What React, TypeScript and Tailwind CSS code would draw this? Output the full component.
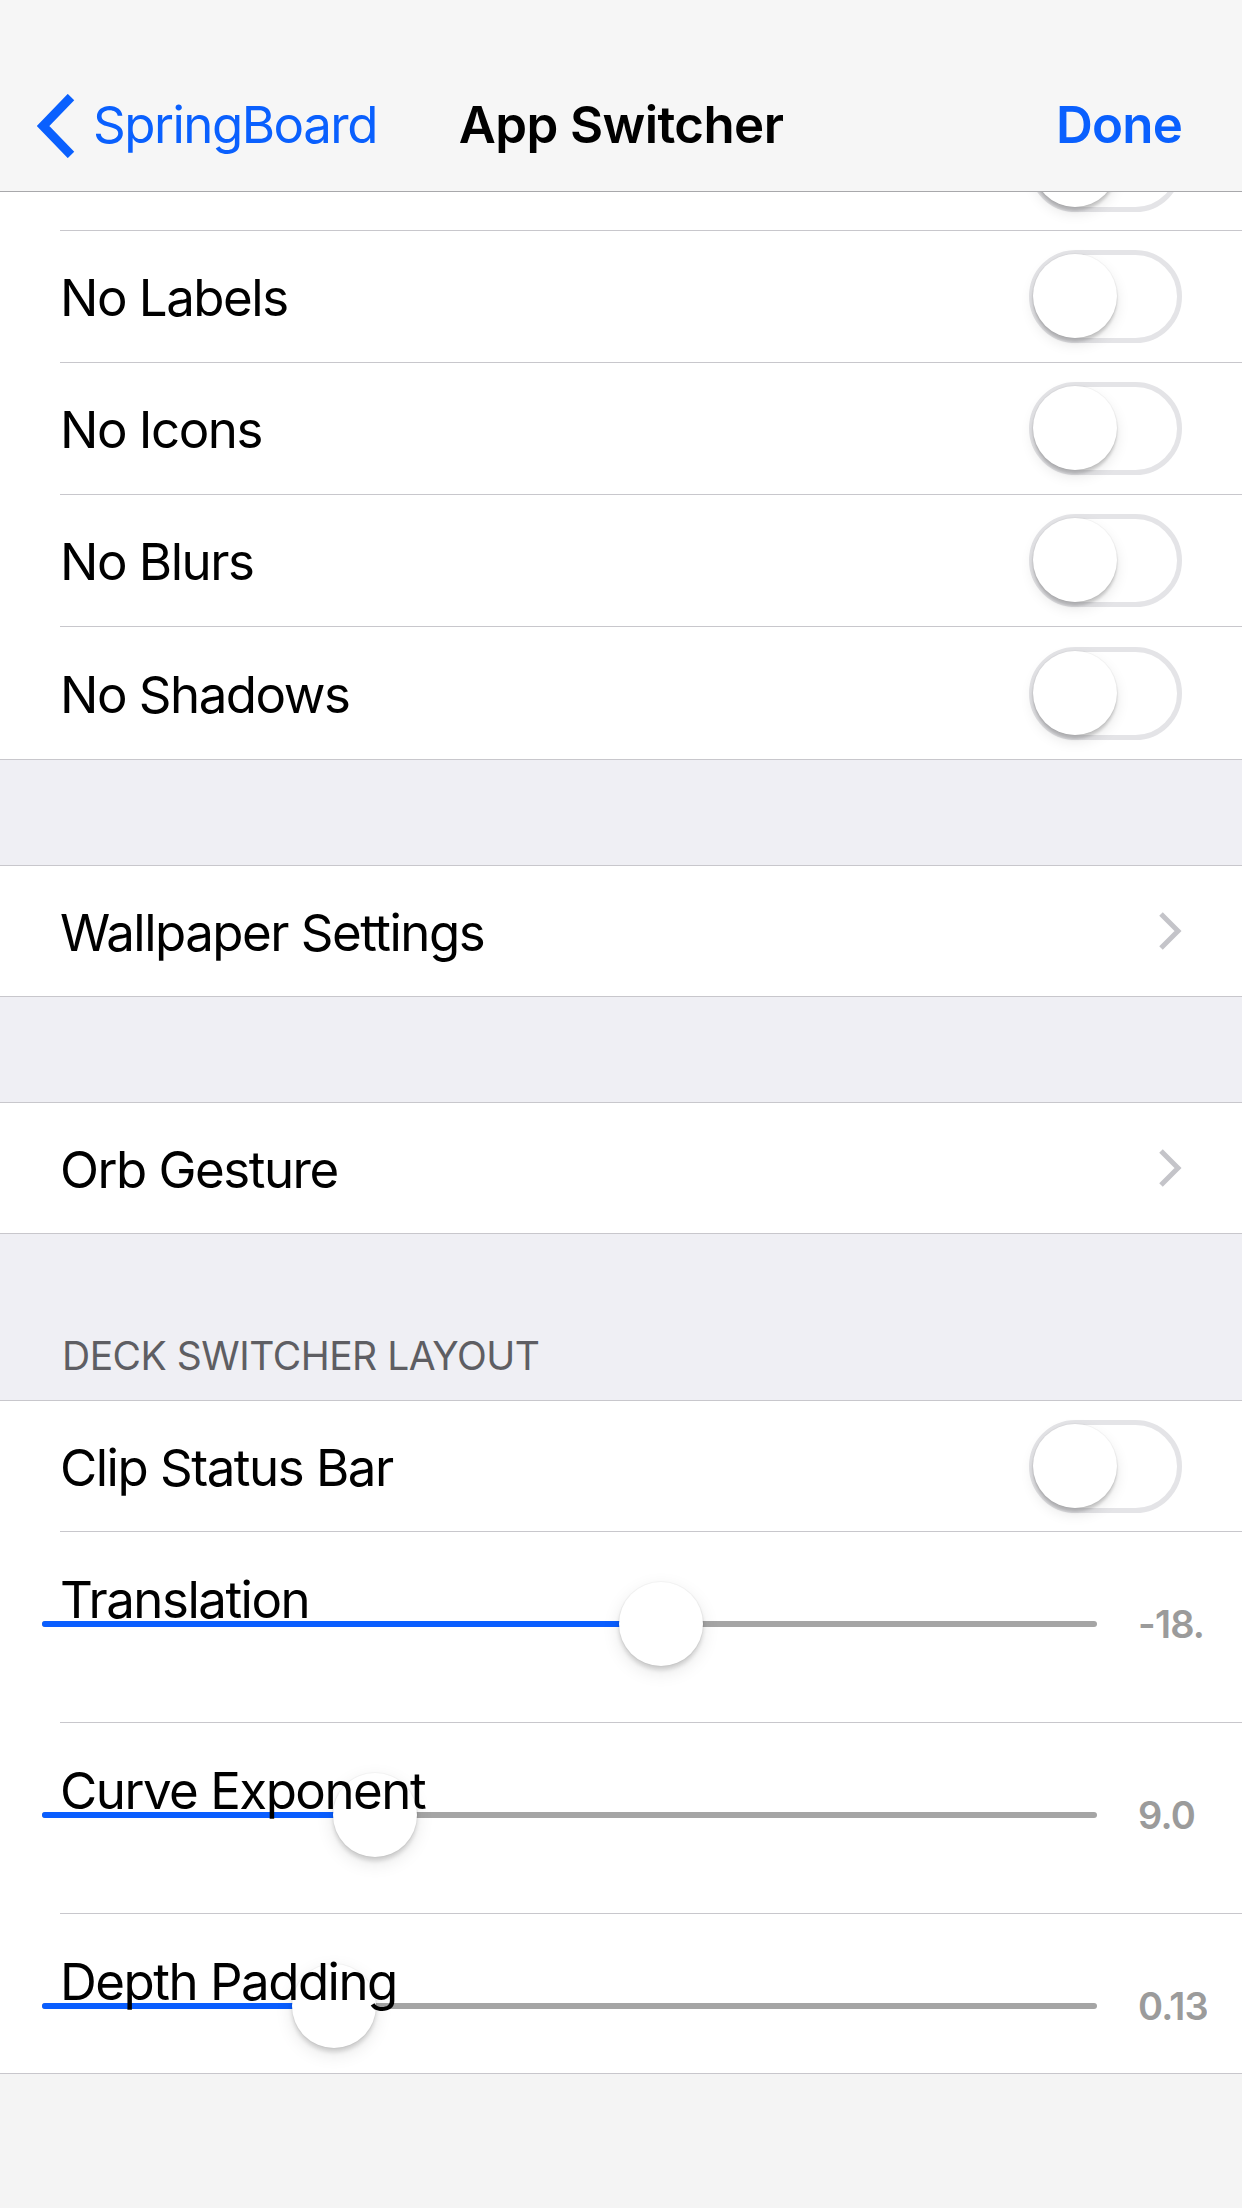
import React from 'react'

const toggleRows = ['No Labels', 'No Icons', 'No Blurs', 'No Shadows']

const sliders = [
  { label: 'Translation', value: '-18.', pos: 619, h: 'h-[191px]', border: true },
  { label: 'Curve Exponent', value: '9.0', pos: 333, h: 'h-[191px]', border: true },
  { label: 'Depth Padding', value: '0.13', pos: 292, h: 'h-[159px]', border: false },
]

const Toggle = ({ className = '' }: { className?: string }) => (
  <div
    className={`relative h-[93px] w-[153px] shrink-0 rounded-full border-[5px] border-[#e4e4e7] bg-white ${className}`}
  >
    <div className="absolute left-[-1px] top-[-1px] h-[84px] w-[84px] rounded-full bg-white shadow-[0_4px_3px_rgba(0,0,0,0.16),0_6px_14px_rgba(0,0,0,0.1),0_0_0_1px_rgba(0,0,0,0.03)]" />
  </div>
)

const Chevron = () => (
  <svg width="24" height="38" viewBox="0 0 24 38" className="shrink-0">
    <path d="M3 2 L20 19 L3 36" fill="none" stroke="#c4c4c9" strokeWidth="5" />
  </svg>
)

const LinkGroup = ({ label }: { label: string }) => (
  <div className="border-y border-[#c8c7cc] bg-white pl-[60px]">
    <div className="flex h-[130px] items-center justify-between pr-[60px]">
      <span className="pt-[4px] text-[51px] tracking-[-1.5px] text-black">{label}</span>
      <Chevron />
    </div>
  </div>
)

const SliderRow = ({
  label,
  value,
  pos,
  h,
  border,
}: {
  label: string
  value: string
  pos: number
  h: string
  border: boolean
}) => (
  <div className="bg-white pl-[60px]">
    <div className={`${h} ${border ? 'border-b border-[#c8c7cc]' : ''}`}>
      <div className="relative z-10 pt-[37px] text-[51px] leading-[61px] tracking-[-1.5px] text-black">
        {label}
      </div>
      <div className="ml-[-18px] mt-[-48px] flex items-center">
        <div className="relative h-[84px] w-[1055px] shrink-0">
          <div className="absolute left-0 right-0 top-[39px] h-[6px] rounded-full bg-[#a5a5a5]" />
          <div
            className="absolute left-0 top-[39px] h-[6px] rounded-l-full bg-[#0a5eff]"
            style={{ width: pos }}
          />
          <div
            className="absolute top-0 h-[84px] w-[84px] rounded-full bg-white shadow-[0_4px_4px_rgba(0,0,0,0.14),0_6px_18px_rgba(0,0,0,0.1),0_0_0_1px_rgba(0,0,0,0.03)]"
            style={{ left: pos - 42 }}
          />
        </div>
        <div className="ml-[41px] w-[69px] overflow-hidden whitespace-nowrap text-[38px] font-semibold tracking-[-0.8px] text-[#9b9b9b]">
          {value}
        </div>
      </div>
    </div>
  </div>
)

export default function App() {
  return (
    <div className="flex h-[2208px] w-[1242px] flex-col overflow-hidden bg-[#efeff4] font-['Inter','Noto_Sans',sans-serif]">
      {/* nav bar */}
      <div className="shrink-0 border-b border-[#a8a8ab] bg-[#f6f6f6] pt-[60px]">
        <div className="grid h-[131px] grid-cols-[1fr_auto_1fr] items-center">
          <div className="flex items-center pl-[37px]">
            <svg width="40" height="64" viewBox="0 0 40 64" className="shrink-0">
              <path d="M34 3 L6 32 L34 61" fill="none" stroke="#0a60fe" strokeWidth="9" />
            </svg>
            <span className="ml-[16px] text-[51px] tracking-[-1.5px] text-[#0a60fe]">SpringBoard</span>
          </div>
          <div className="text-[51px] font-semibold tracking-[-0.6px] text-black">App Switcher</div>
          <div className="pr-[60px] text-right text-[51px] font-semibold tracking-[-0.8px] text-[#0a60fe]">
            Done
          </div>
        </div>
      </div>

      {/* first group, scrolled under the bar */}
      <div className="shrink-0 border-b border-[#c8c7cc] bg-white">
        <div className="ml-[60px] flex h-[39px] items-end justify-end overflow-hidden border-b border-[#c8c7cc] pr-[60px]">
          <Toggle className="mb-[18px]" />
        </div>
        {toggleRows.map((label, i) => (
          <div key={label} className="pl-[60px]">
            <div
              className={`flex h-[132px] items-center justify-between pr-[60px] ${
                i < toggleRows.length - 1 ? 'border-b border-[#c8c7cc]' : ''
              }`}
            >
              <span className="pt-[4px] text-[51px] tracking-[-1.5px] text-black">{label}</span>
              <Toggle />
            </div>
          </div>
        ))}
      </div>

      <div className="h-[105px] shrink-0" />
      <LinkGroup label="Wallpaper Settings" />
      <div className="h-[105px] shrink-0" />
      <LinkGroup label="Orb Gesture" />

      <div className="flex h-[166px] shrink-0 items-end px-[62px] pb-[21px]">
        <span className="text-[39px] leading-[46px] tracking-[-0.5px] text-[#5e5e63]">DECK SWITCHER LAYOUT</span>
      </div>

      {/* deck switcher group */}
      <div className="shrink-0 border-y border-[#c8c7cc] bg-white">
        <div className="pl-[60px]">
          <div className="flex h-[131px] items-center justify-between border-b border-[#c8c7cc] pr-[60px]">
            <span className="pt-[4px] text-[51px] tracking-[-1.5px] text-black">Clip Status Bar</span>
            <Toggle />
          </div>
        </div>
        {sliders.map((s) => (
          <SliderRow key={s.label} {...s} />
        ))}
      </div>

      <div className="flex-1 bg-[#f4f4f4]" />
    </div>
  )
}
